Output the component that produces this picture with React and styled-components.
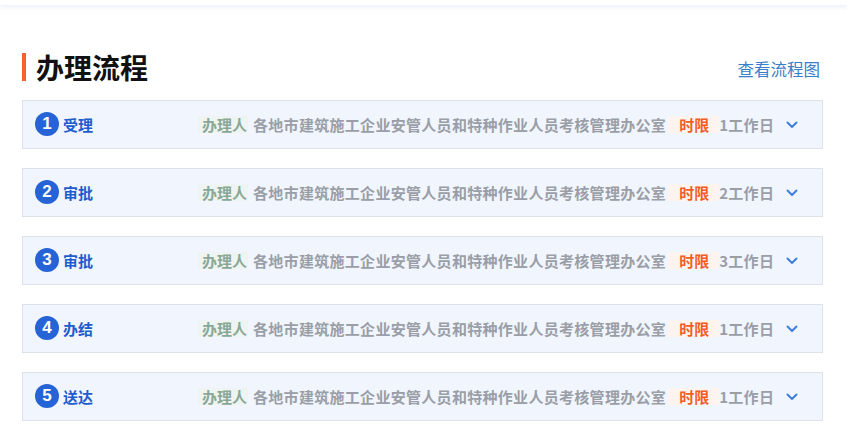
import React from "react";
import styled, { createGlobalStyle } from "styled-components";

const Global = createGlobalStyle`
  html, body { margin: 0; padding: 0; background: #fff; }
  body { font-family: "Noto Sans CJK SC", "Noto Sans", sans-serif; }
`;

const TopBar = styled.div`
  height: 5px;
  background: #fff;
  box-shadow: 0 2px 4px rgba(200, 205, 240, 0.35);
`;

const Section = styled.section`
  padding: 0 24px 0 22px;
`;

const Header = styled.div`
  display: flex;
  justify-content: space-between;
  align-items: flex-end;
  margin-top: 48px;
`;

const Title = styled.h2`
  margin: 0;
  border-left: 4px solid #f5622a;
  padding-left: 10px;
  height: 28px;
  line-height: 28px;
  font-size: 28px;
  font-weight: 700;
  color: #111;
`;

const Link = styled.a`
  font-size: 16.5px;
  line-height: 18px;
  color: #3a7dc9;
  text-decoration: none;
  margin-right: 3px;
  margin-bottom: 3px;
`;

const List = styled.div`
  margin-top: 19px;
  display: flex;
  flex-direction: column;
  gap: 19px;
`;

const Row = styled.div`
  display: flex;
  align-items: center;
  height: 46px;
  border: 1px solid #dde1ea;
  background: #f1f5fd;
  padding-left: 12px;
  padding-bottom: 1px;
  font-size: 15px;
  font-weight: 700;
`;

const Step = styled.div`
  width: 163px;
  display: flex;
  align-items: center;
  gap: 4px;
`;

const Num = styled.span`
  width: 24px;
  height: 24px;
  border-radius: 50%;
  background: #2563d6;
  color: #fff;
  font-family: "Liberation Sans", Arial, sans-serif;
  font-size: 17px;
  font-weight: 700;
  display: flex;
  align-items: center;
  justify-content: center;
`;

const Name = styled.span`
  color: #1f5ccd;
  font-size: 15px;
`;

const Tag = styled.span`
  background: ${(p) => p.$bg};
  color: ${(p) => p.$color};
  padding: ${(p) => p.$pad};
  margin-left: ${(p) => p.$ml || 0}px;
  line-height: 17px;
`;

const Value = styled.span`
  color: #9a9ea7;
  margin-left: ${(p) => p.$ml || 0}px;
  letter-spacing: 0.3px;
  line-height: 17px;
`;

const Chevron = styled.svg`
  margin-left: 12px;
  margin-top: 2px;
`;

const steps = [
  ["1", "受理", "1"],
  ["2", "审批", "2"],
  ["3", "审批", "3"],
  ["4", "办结", "1"],
  ["5", "送达", "1"],
];

export default function App() {
  return (
    <>
      <Global />
      <TopBar />
      <Section>
        <Header>
          <Title>办理流程</Title>
          <Link href="#">查看流程图</Link>
        </Header>
        <List>
          {steps.map(([n, name, days]) => (
            <Row key={n + name}>
              <Step>
                <Num>{n}</Num>
                <Name>{name}</Name>
              </Step>
              <Tag $bg="#eef4f1" $color="#8aa897" $pad="0 1px 0 4px">办理人</Tag>
              <Value $ml={5}>各地市建筑施工企业安管人员和特种作业人员考核管理办公室</Value>
              <Tag $bg="#fdf3ef" $color="#f25c26" $pad="0 10px 0 11px" $ml={2}>时限</Tag>
              <Value>{days}工作日</Value>
              <Chevron width="12" height="8" viewBox="0 0 12 8">
                <path d="M1.5 1.5 L6 6 L10.5 1.5" fill="none" stroke="#3f7fe0" strokeWidth="2" strokeLinecap="round" strokeLinejoin="round" />
              </Chevron>
            </Row>
          ))}
        </List>
      </Section>
    </>
  );
}
